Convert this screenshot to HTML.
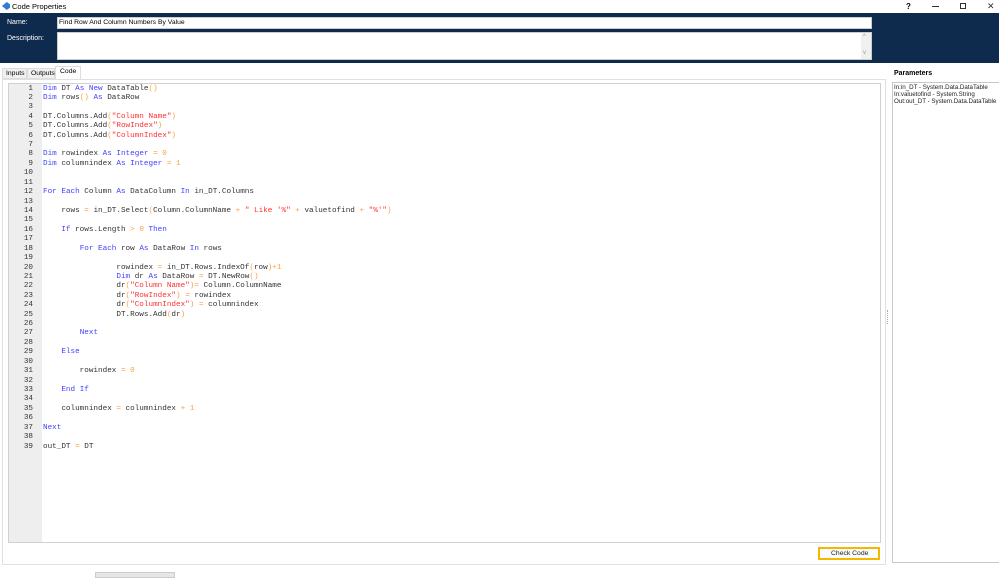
<!DOCTYPE html>
<html><head><meta charset="utf-8"><style>
*{margin:0;padding:0;box-sizing:border-box}
body{width:999px;height:576px;background:#fff;font-family:"Liberation Sans",sans-serif;position:relative;overflow:hidden}
.abs{position:absolute}
.t{font-size:7px;color:#000}
pre{font-family:"Liberation Mono",monospace;font-size:7.65px;line-height:9.42px;color:#333}
.k{color:#4040ff}.s{color:#ff3030}.o{color:#ffa040}
</style></head><body>
<div class="abs" style="left:0;top:0;width:999px;height:13px;background:#fff"></div>
<div class="abs" style="left:2px;top:2px;width:8px;height:8px;background:#2a7fd0;clip-path:polygon(0 50%,60% 0,100% 30%,100% 70%,60% 100%)"></div>
<div class="abs t" style="left:12px;top:2px;font-size:7.5px">Code Properties</div>
<div class="abs t" style="left:906px;top:2px;font-size:8px;font-weight:bold">?</div>
<div class="abs" style="left:932px;top:6px;width:7px;height:1px;background:#333"></div>
<div class="abs" style="left:960px;top:3px;width:6px;height:6px;border:1px solid #333"></div>
<div class="abs t" style="left:987px;top:1px;font-size:9px;color:#333">✕</div>
<div class="abs" style="left:0;top:13px;width:999px;height:50px;background:#0e2a4c"></div>
<div class="abs t" style="left:7px;top:19px;color:#fff">Name:</div>
<div class="abs t" style="left:7px;top:35px;color:#fff">Description:</div>
<div class="abs" style="left:57px;top:17px;width:815px;height:12px;background:#fff;border:1px solid #ccc"></div>
<div class="abs t" style="left:59px;top:19px;font-size:6.8px">Find Row And Column Numbers By Value</div>
<div class="abs" style="left:57px;top:32px;width:815px;height:28px;background:#fff;border:1px solid #ccc"></div>
<div class="abs" style="left:861px;top:33px;width:10px;height:26px;background:#f0f0f0"></div>
<div class="abs t" style="left:863px;top:34px;font-size:6px;color:#999">^</div>
<div class="abs t" style="left:863px;top:50px;font-size:6px;color:#999">v</div>
<div class="abs" style="left:2px;top:68px;width:25px;height:11px;background:#f0f0f0;border:1px solid #ddd"></div>
<div class="abs t" style="left:6px;top:70px;font-size:6.8px">Inputs</div>
<div class="abs" style="left:27px;top:68px;width:28px;height:11px;background:#f0f0f0;border:1px solid #ddd"></div>
<div class="abs t" style="left:31px;top:70px;font-size:6.8px">Outputs</div>
<div class="abs" style="left:55px;top:66px;width:26px;height:13px;background:#fff;border:1px solid #ddd;border-bottom:none"></div>
<div class="abs t" style="left:60px;top:68px;font-size:6.8px">Code</div>
<div class="abs" style="left:2px;top:79px;width:884px;height:486px;border:1px solid #e0e0e0;background:#fff"></div>
<div class="abs" style="left:8px;top:83px;width:873px;height:460px;border:1px solid #d0d0d0;background:#fff"></div>
<div class="abs" style="left:9px;top:84px;width:33px;height:458px;background:#eeeeee"></div>
<pre class="abs" style="left:9px;top:84.5px;width:24px;text-align:right;color:#333">1
2
3
4
5
6
7
8
9
10
11
12
13
14
15
16
17
18
19
20
21
22
23
24
25
26
27
28
29
30
31
32
33
34
35
36
37
38
39</pre>
<pre class="abs" style="left:43px;top:84.5px"><span class="k">Dim</span> DT <span class="k">As</span> <span class="k">New</span> DataTable<span class="o">()</span>
<span class="k">Dim</span> rows<span class="o">()</span> <span class="k">As</span> DataRow

DT.Columns.Add<span class="o">(</span><span class="s">"Column Name"</span><span class="o">)</span>
DT.Columns.Add<span class="o">(</span><span class="s">"RowIndex"</span><span class="o">)</span>
DT.Columns.Add<span class="o">(</span><span class="s">"ColumnIndex"</span><span class="o">)</span>

<span class="k">Dim</span> rowindex <span class="k">As</span> <span class="k">Integer</span> <span class="o">=</span> <span class="o">0</span>
<span class="k">Dim</span> columnindex <span class="k">As</span> <span class="k">Integer</span> <span class="o">=</span> <span class="o">1</span>


<span class="k">For</span> <span class="k">Each</span> Column <span class="k">As</span> DataColumn <span class="k">In</span> in_DT.Columns

    rows <span class="o">=</span> in_DT.Select<span class="o">(</span>Column.ColumnName <span class="o">+</span> <span class="s">" Like '%"</span> <span class="o">+</span> valuetofind <span class="o">+</span> <span class="s">"%'"</span><span class="o">)</span>

    <span class="k">If</span> rows.Length <span class="o">&gt;</span> <span class="o">0</span> <span class="k">Then</span>

        <span class="k">For</span> <span class="k">Each</span> row <span class="k">As</span> DataRow <span class="k">In</span> rows

                rowindex <span class="o">=</span> in_DT.Rows.IndexOf<span class="o">(</span>row<span class="o">)+1</span>
                <span class="k">Dim</span> dr <span class="k">As</span> DataRow <span class="o">=</span> DT.NewRow<span class="o">()</span>
                dr<span class="o">(</span><span class="s">"Column Name"</span><span class="o">)=</span> Column.ColumnName
                dr<span class="o">(</span><span class="s">"RowIndex"</span><span class="o">)</span> <span class="o">=</span> rowindex
                dr<span class="o">(</span><span class="s">"ColumnIndex"</span><span class="o">)</span> <span class="o">=</span> columnindex
                DT.Rows.Add<span class="o">(</span>dr<span class="o">)</span>

        <span class="k">Next</span>

    <span class="k">Else</span>

        rowindex <span class="o">=</span> <span class="o">0</span>

    <span class="k">End</span> <span class="k">If</span>

    columnindex <span class="o">=</span> columnindex <span class="o">+</span> <span class="o">1</span>

<span class="k">Next</span>

out_DT <span class="o">=</span> DT</pre>
<div class="abs" style="left:818px;top:547px;width:62px;height:13px;border:2px solid #f5b800;background:#fbfbfb"></div>
<div class="abs t" style="left:831px;top:550px;font-size:6.8px;color:#222">Check Code</div>
<div class="abs" style="left:887px;top:310px;width:2px;height:14px;border-left:1px dotted #aaa"></div>
<div class="abs t" style="left:894px;top:70px;font-size:7px;font-weight:bold">Parameters</div>
<div class="abs" style="left:892px;top:82px;width:110px;height:481px;border:1px solid #c8c8cc;background:#fff"></div>
<div class="abs" style="left:894px;top:84px;font-size:6.2px;line-height:7px;color:#222;white-space:nowrap">In:in_DT - System.Data.DataTable<br>In:valuetofind - System.String<br>Out:out_DT - System.Data.DataTable</div>
<div class="abs" style="left:95px;top:572px;width:80px;height:6px;background:#e6e6e6;border:1px solid #ccc"></div>
</body></html>
